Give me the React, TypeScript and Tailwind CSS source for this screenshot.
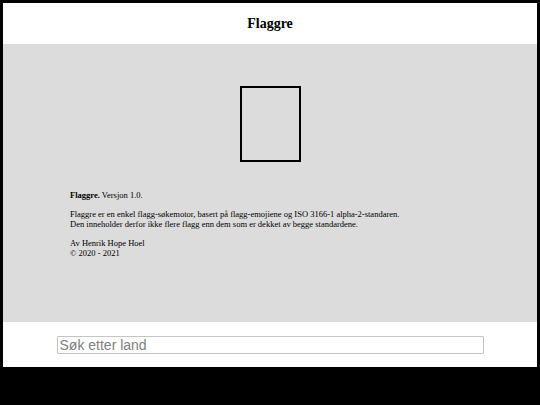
import React from "react";

export default function App() {
  return (
    <div className="w-[540px] h-[405px] bg-black pt-[3px] pl-[3px] overflow-hidden">
      <div className="w-[534px] h-[364px] bg-white flex flex-col" style={{ fontFamily: '"Liberation Serif", serif' }}>
        <header className="h-[41px] flex items-center justify-center">
          <h1 className="text-[14px] font-bold text-black leading-none">Flaggre</h1>
        </header>
        <main className="h-[278px] bg-[#dcdcdc] flex flex-col">
          <div className="flex justify-center pt-[42px]">
            <div className="w-[61px] h-[76px] border-2 border-black"></div>
          </div>
          <div className="pl-[67px] pt-[28px] text-[8.5px] leading-[10px] text-black">
            <p><b>Flaggre.</b> Versjon 1.0.</p>
            <p className="mt-[9px]">
              Flaggre er en enkel flagg-søkemotor, basert på flagg-emojiene og ISO 3166-1 alpha-2-standaren.
              <br />
              Den inneholder derfor ikke flere flagg enn dem som er dekket av begge standardene.
            </p>
            <p className="mt-[9px]">
              Av Henrik Hope Hoel
              <br />© 2020 - 2021
            </p>
          </div>
        </main>
        <footer className="flex-1 flex justify-center pt-[14px]">
          <input
            type="text"
            placeholder="Søk etter land"
            className="w-[427px] h-[18px] border border-[#c4c4c4] rounded-[1px] px-[2px] text-[14px] leading-none placeholder:text-[#808080] outline-none"
            style={{ fontFamily: '"Liberation Sans", sans-serif' }}
          />
        </footer>
      </div>
    </div>
  );
}
